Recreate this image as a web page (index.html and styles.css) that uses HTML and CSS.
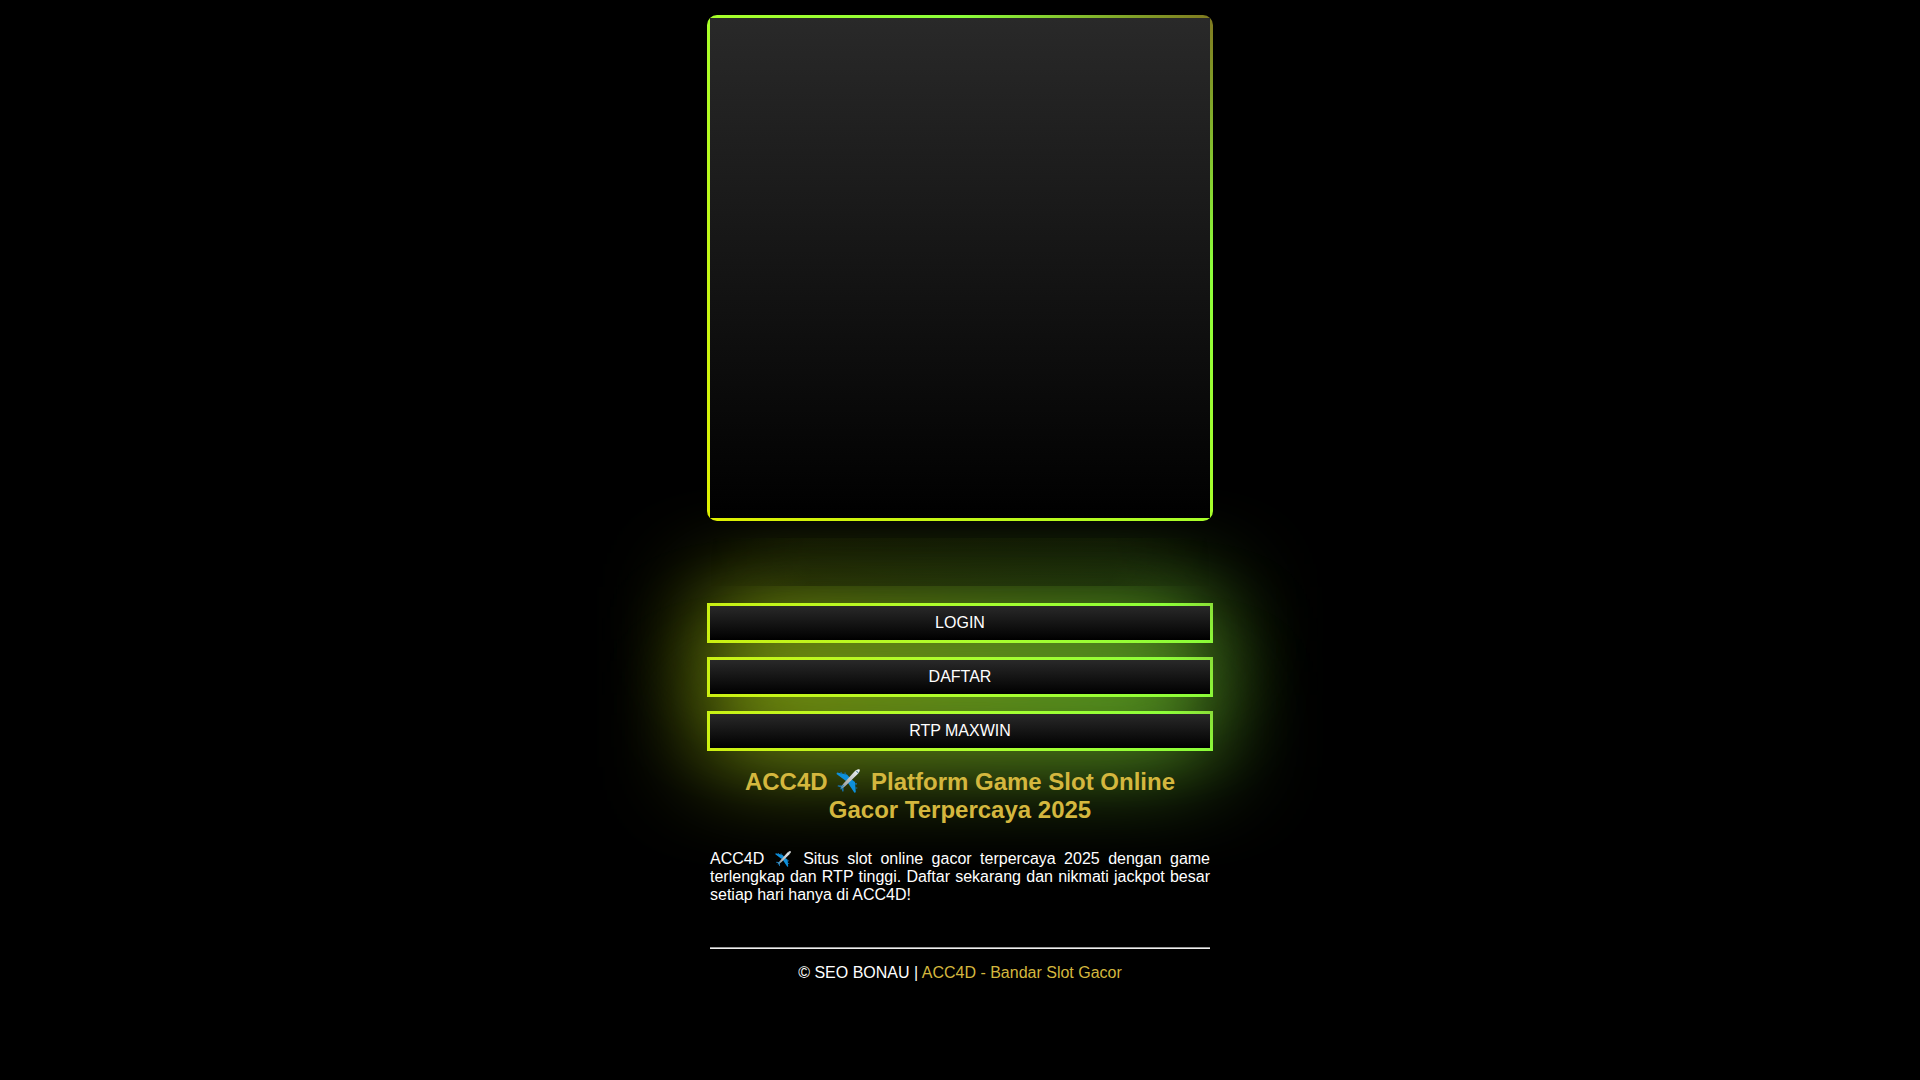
FILE: index.html
```
<!DOCTYPE html>
<html lang="id">
<head>
<meta charset="utf-8">
<meta name="viewport" content="width=device-width, initial-scale=1">
<title>ACC4D - Bandar Slot Gacor</title>
<link rel="stylesheet" href="styles.css">
</head>
<body>
<svg width="0" height="0" class="sprite" aria-hidden="true">
  <defs>
    <linearGradient id="hull" x1="0" y1="1" x2="1" y2="0">
      <stop offset="0" stop-color="#8f9496"/>
      <stop offset=".5" stop-color="#c2c6c8"/>
      <stop offset="1" stop-color="#f4f6f7"/>
    </linearGradient>
    <symbol id="plane" viewBox="0 0 24 24">
      <path fill="#0d8fdb" d="M14 9 11 5.500 1 3.500 0.500 5 10 12zM15 10l4 3 .8 10.200-1.400.600L12 14z"/>
      <path fill="#1672ad" d="M6 16.500 2 16.300 1.500 17.300 6 19zM7.500 18 7.600 22.300 6.600 22.800 5 19z"/>
      <path fill="#1672ad" d="M4.500 2.900h1.200v2.300H4.500zM8.500 3.500h1.200v2.300H8.500zM19 14.300h2v1.200h-2zM19.300 18.400h2v1.200h-2z"/>
      <path fill="url(#hull)" d="M23.600.5C22.200-.2 20 .8 18 3L7.500 14.500C5.800 16.500 4.900 18.200 4.800 19.600 6.300 19.400 8 18.300 9.900 16.500L21 5.800C23.200 3.600 24.200 1.700 23.600.5z"/>
      <path fill="#0d8fdb" d="M8 16.200 4.300 20.600 4 20.200 7.200 15.800z"/>
      <path fill="#4a7f9b" d="M20.800 1.800 22.500 3.400 22 4.200 20 2.300z"/>
    </symbol>
  </defs>
</svg>
<main class="page">
  <div class="banner framed"></div>
  <div class="strip"></div>
  <nav class="actions">
    <a class="action framed glow" href="#login">LOGIN</a>
    <a class="action framed glow" href="#daftar">DAFTAR</a>
    <a class="action framed glow" href="#rtp">RTP MAXWIN</a>
  </nav>
  <h1 class="title">ACC4D <svg class="emoji" aria-hidden="true"><use href="#plane"/></svg> Platform Game Slot Online Gacor Terpercaya 2025</h1>
  <p class="intro">ACC4D <svg class="emoji" aria-hidden="true"><use href="#plane"/></svg> Situs slot online gacor terpercaya 2025 dengan game terlengkap dan RTP tinggi. Daftar sekarang dan nikmati jackpot besar setiap hari hanya di ACC4D!</p>
  <hr class="rule">
  <footer class="footer">© SEO BONAU | <a class="footer-link" href="#home">ACC4D - Bandar Slot Gacor</a></footer>
</main>
</body>
</html>
```
FILE: styles.css
```
* { box-sizing: border-box; }
body {
  margin: 0;
  background: #000;
  color: #fff;
  font-family: "Liberation Sans", Arial, sans-serif;
  font-size: 16px;
  line-height: 18px;
}
.sprite { position: absolute; }
.page {
  position: relative;
  z-index: 0;
  width: 100%;
  max-width: 500px;
  margin: 0 auto;
  padding-top: 18px;
}
.framed {
  position: relative;
  background: linear-gradient(to bottom, #292929, #000);
}
/* gradient border and the blurred halo share one palette */
.framed::before,
.glow::after {
  content: "";
  position: absolute;
  inset: -3px;
  z-index: -1;
  background: linear-gradient(45deg, #d0f010, #adff2f 50%, #8cff3a 91%, #8ad838);
}
.glow::after {
  filter: blur(50px);
}
.banner {
  aspect-ratio: 1;
}
.banner::before {
  border-radius: 10px;
  background: linear-gradient(45deg, #e0f000, #a8ff2a 50%, #8cff3a 75%, #80a028 92%, #807820);
}
/* tinted band over the halo, fading out towards both sides */
.strip {
  height: 48px;
  margin: 20px 0;
  background: linear-gradient(to bottom, rgba(120, 160, 30, 0.05), rgba(0, 0, 0, 0.28));
  mask-image: linear-gradient(to right, transparent, #000 20%, #000 80%, transparent);
}
.actions {
  display: flex;
  flex-direction: column;
  gap: 20px;
}
.action {
  padding: 8px;
  color: #fff;
  text-align: center;
  text-decoration: none;
}
.title {
  margin: 20px 0 26px;
  color: #d4b73e;
  font-size: 24px;
  line-height: 28px;
  text-align: center;
}
.emoji {
  width: 1em;
  height: 1em;
  margin: 0 4px 0 2px;
  vertical-align: -3px;
}
.intro {
  margin: 0 0 43px;
  text-align: justify;
}
.rule {
  margin: 0 0 15px;
  border: 0;
  border-top: 1px solid #9a9a9a;
  border-bottom: 1px solid #eee;
}
.footer {
  text-align: center;
}
.footer-link {
  color: #d4b73e;
  text-decoration: none;
}
```
